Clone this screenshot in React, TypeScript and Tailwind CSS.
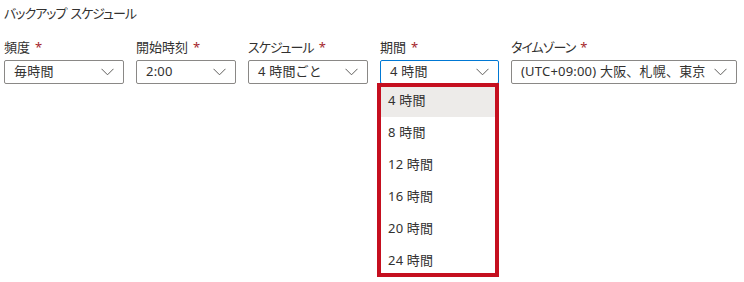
import { ReactNode } from "react";

const font = { fontFamily: '"Noto Sans", "Noto Sans CJK JP", sans-serif' };

const hours = ["4 時間", "8 時間", "12 時間", "16 時間", "20 時間", "24 時間"];

function Chevron() {
  return (
    <svg width="13" height="8" viewBox="0 0 13 8" className="shrink-0" aria-hidden>
      <path d="M0.5 0.8 L6.5 6.8 L12.5 0.8" fill="none" stroke="#605e5c" strokeWidth="1" />
    </svg>
  );
}

function Field({
  label,
  value,
  width,
  kana,
  focused,
  children,
}: {
  label: string;
  value: string;
  width: string;
  kana?: boolean;
  focused?: boolean;
  children?: ReactNode;
}) {
  return (
    <div className={`flex flex-col ${width}`}>
      <div className="h-[20px] text-[13px] leading-[20px] text-[#323130] whitespace-nowrap [font-feature-settings:'palt']">
        <span className={kana ? "tracking-[-1px]" : ""}>{label}</span>
        <span className="ml-[5px] text-[#a4262c]">*</span>
      </div>
      <div className="relative mt-[3px]">
        <div
          className={`flex h-[24px] items-center justify-between rounded-[2px] border pl-[9px] pr-[9px] text-[13px] text-[#323130] ${
            focused ? "border-[#0078d4] border-[1.5px]" : "border-[#8a8886]"
          }`}
        >
          <span className="whitespace-nowrap tracking-[0.2px]">{value}</span>
          <Chevron />
        </div>
        {children}
      </div>
    </div>
  );
}

export default function App() {
  return (
    <div className="h-[282px] w-[744px] bg-white px-[4px]" style={font}>
      <div className="flex h-[28px] items-center gap-[4px] whitespace-nowrap text-[13px] tracking-[-1px] text-[#323130] [font-feature-settings:'palt']">
        <span>バックアップ</span>
        <span>スケジュール</span>
      </div>
      <div className="mt-[9px] flex gap-[12px]">
        <Field label="頻度" value="毎時間" width="w-[120px]" />
        <Field label="開始時刻" value="2:00" width="w-[100px]" />
        <Field label="スケジュール" value="4 時間ごと" width="w-[120px]" kana />
        <Field label="期間" value="4 時間" width="w-[119px]" focused>
          <div className="absolute left-[1px] top-[25px] w-[114px] bg-white">
            {hours.map((h, i) => (
              <div
                key={h}
                className={`flex h-[32px] items-center pl-[7px] text-[13px] tracking-[0.2px] text-[#323130] ${
                  i === 0 ? "bg-[#edebe9]" : ""
                }`}
              >
                {h}
              </div>
            ))}
          </div>
          <div className="pointer-events-none absolute left-[-3px] top-[23px] h-[194px] w-[122px] border-[4px] border-[#c50f1f]" />
        </Field>
        <Field label="タイムゾーン" value="(UTC+09:00) 大阪、札幌、東京" width="w-[226px]" kana />
      </div>
    </div>
  );
}
